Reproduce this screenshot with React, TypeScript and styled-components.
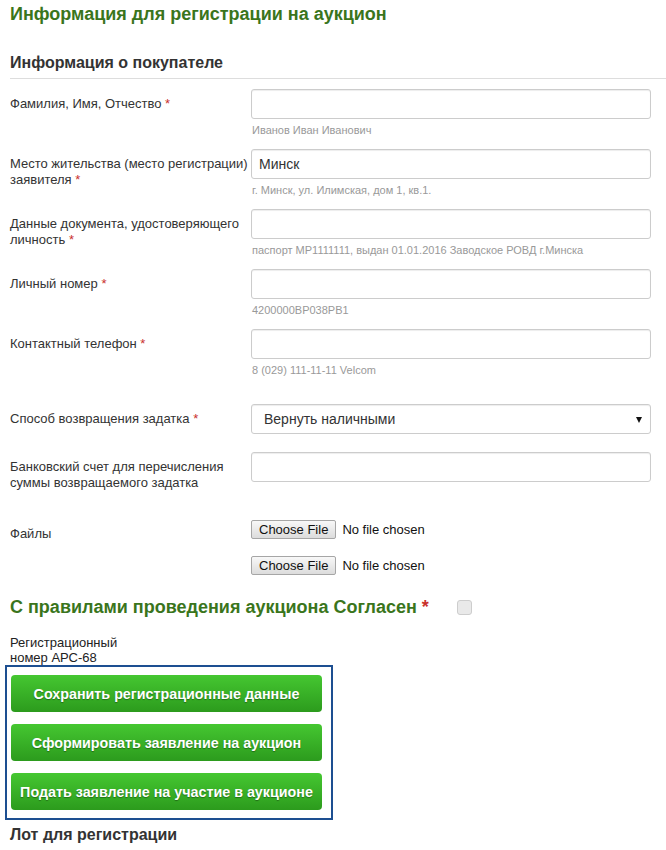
import React from 'react'
import styled, { createGlobalStyle } from 'styled-components'

const GlobalStyle = createGlobalStyle`
    body {
        margin: 0;
        background: #fff;
        font-family: 'Liberation Sans', Arial, sans-serif;
        color: #333;
    }
`

const Page = styled.div`
    width: 666px;
    box-sizing: border-box;
    padding: 3px 0 0 10px;
`
const Title = styled.h1`
    margin: 0;
    font-size: 18px;
    line-height: 22px;
    font-weight: bold;
    color: #3a751c;
`
const SectionTitle = styled.h2`
    margin: 28px 0 0 0;
    padding-bottom: 5px;
    font-size: 16px;
    line-height: 20px;
    font-weight: bold;
    color: #333;
    border-bottom: 1px solid #ddd;
`
const Form = styled.form`
    margin-top: 10px;
`
const Row = styled.div<{ $after: number }>`
    display: grid;
    grid-template-columns: 241px 400px;
    margin-bottom: ${(p) => p.$after}px;
`
const Label = styled.label<{ $top?: number }>`
    padding-top: ${(p) => p.$top ?? 7}px;
    font-size: 13px;
    line-height: 16px;
    color: #333;
`
const Star = styled.span`
    color: #c9302c;
`
const Field = styled.div`
    display: flex;
    flex-direction: column;
`
const Input = styled.input`
    box-sizing: border-box;
    width: 400px;
    height: 30px;
    padding: 0 7px;
    border: 1px solid #ccc;
    border-radius: 3px;
    box-shadow: inset 0 1px 1px rgba(0, 0, 0, 0.075);
    font-family: inherit;
    font-size: 14px;
    color: #333;
    outline: none;
`
const Hint = styled.div`
    margin-top: 4px;
    padding-left: 1px;
    font-size: 11px;
    line-height: 14px;
    color: #999;
`
const SelectBox = styled.div`
    position: relative;
    width: 400px;

    &::after {
        content: '';
        position: absolute;
        right: 9px;
        top: 13px;
        border-left: 3.5px solid transparent;
        border-right: 3.5px solid transparent;
        border-top: 6px solid #111;
        pointer-events: none;
    }
`
const Select = styled.select`
    box-sizing: border-box;
    width: 400px;
    height: 30px;
    padding: 0 12px;
    appearance: none;
    background: #fff;
    border: 1px solid #ccc;
    border-radius: 3px;
    box-shadow: inset 0 1px 1px rgba(0, 0, 0, 0.075);
    font-family: inherit;
    font-size: 14px;
    color: #333;
    outline: none;
`
const Files = styled.div`
    display: flex;
    flex-direction: column;
    gap: 18px;
`
const FilePick = styled.div`
    display: flex;
    align-items: center;
    gap: 6px;
    height: 18px;
    font-size: 13px;
    color: #111;
`
const FileButton = styled.button`
    box-sizing: border-box;
    height: 19px;
    padding: 0 7px;
    border: 1px solid #a6a6a6;
    border-radius: 2px;
    background: linear-gradient(#f8f8f8, #dcdcdc);
    font-family: inherit;
    font-size: 13px;
    color: #111;
`
const Agree = styled.div`
    display: flex;
    align-items: center;
    margin-top: 23px;
    font-size: 18px;
    line-height: 20px;
    font-weight: bold;
    color: #3a751c;
`
const Check = styled.span`
    display: inline-block;
    width: 13px;
    height: 13px;
    margin-left: 28px;
    border: 1px solid #cdcdcd;
    border-radius: 3px;
    background: #e9e9e9;
`
const RegNo = styled.div`
    margin-top: 18px;
    font-size: 13px;
    line-height: 15px;
    color: #222;
`
const ActionBox = styled.div`
    box-sizing: border-box;
    display: flex;
    flex-direction: column;
    gap: 12px;
    width: 328px;
    margin-left: -5px;
    padding: 8px 0 8px 4px;
    border: 2px solid #1d4f91;
`
const GreenButton = styled.button`
    width: 311px;
    height: 37px;
    padding: 0;
    border: none;
    border-radius: 4px;
    background: linear-gradient(#45c731, #2c9b1d);
    font-family: inherit;
    font-size: 14.3px;
    font-weight: bold;
    color: #fff;
    text-shadow: 0 1px 1px rgba(0, 0, 0, 0.35);
    white-space: nowrap;
`
const LotTitle = styled.h2`
    margin: 5px 0 0 0;
    font-size: 16px;
    line-height: 20px;
    font-weight: bold;
    color: #333;
`

const App: React.FC = () => {
    return (
        <Page>
            <GlobalStyle />
            <Title>Информация для регистрации на аукцион</Title>
            <SectionTitle>Информация о покупателе</SectionTitle>
            <Form>
                <Row $after={12}>
                    <Label>
                        Фамилия, Имя, Отчество <Star>*</Star>
                    </Label>
                    <Field>
                        <Input type="text" />
                        <Hint>Иванов Иван Иванович</Hint>
                    </Field>
                </Row>
                <Row $after={12}>
                    <Label>
                        Место жительства (место регистрации) заявителя <Star>*</Star>
                    </Label>
                    <Field>
                        <Input type="text" defaultValue="Минск" />
                        <Hint>г. Минск, ул. Илимская, дом 1, кв.1.</Hint>
                    </Field>
                </Row>
                <Row $after={12}>
                    <Label>
                        Данные документа, удостоверяющего личность <Star>*</Star>
                    </Label>
                    <Field>
                        <Input type="text" />
                        <Hint>паспорт MP1111111, выдан 01.01.2016 Заводское РОВД г.Минска</Hint>
                    </Field>
                </Row>
                <Row $after={12}>
                    <Label>
                        Личный номер <Star>*</Star>
                    </Label>
                    <Field>
                        <Input type="text" />
                        <Hint>4200000BP038PB1</Hint>
                    </Field>
                </Row>
                <Row $after={27}>
                    <Label>
                        Контактный телефон <Star>*</Star>
                    </Label>
                    <Field>
                        <Input type="text" />
                        <Hint>8 (029) 111-11-11 Velcom</Hint>
                    </Field>
                </Row>
                <Row $after={18}>
                    <Label>
                        Способ возвращения задатка <Star>*</Star>
                    </Label>
                    <SelectBox>
                        <Select defaultValue="cash">
                            <option value="cash">Вернуть наличными</option>
                            <option value="bank">Вернуть на счет</option>
                        </Select>
                    </SelectBox>
                </Row>
                <Row $after={29}>
                    <Label>Банковский счет для перечисления суммы возвращаемого задатка</Label>
                    <Field>
                        <Input type="text" />
                    </Field>
                </Row>
                <Row $after={0}>
                    <Label $top={6}>Файлы</Label>
                    <Files>
                        <FilePick>
                            <FileButton type="button">Choose File</FileButton>
                            No file chosen
                        </FilePick>
                        <FilePick>
                            <FileButton type="button">Choose File</FileButton>
                            No file chosen
                        </FilePick>
                    </Files>
                </Row>
                <Agree>
                    С правилами проведения аукциона Согласен&nbsp;<Star>*</Star>
                    <Check />
                </Agree>
                <RegNo>
                    Регистрационный
                    <br />
                    номер АРС-68
                </RegNo>
                <ActionBox>
                    <GreenButton type="button">Сохранить регистрационные данные</GreenButton>
                    <GreenButton type="button">Сформировать заявление на аукцион</GreenButton>
                    <GreenButton type="button">Подать заявление на участие в аукционе</GreenButton>
                </ActionBox>
            </Form>
            <LotTitle>Лот для регистрации</LotTitle>
        </Page>
    )
}

export default App
